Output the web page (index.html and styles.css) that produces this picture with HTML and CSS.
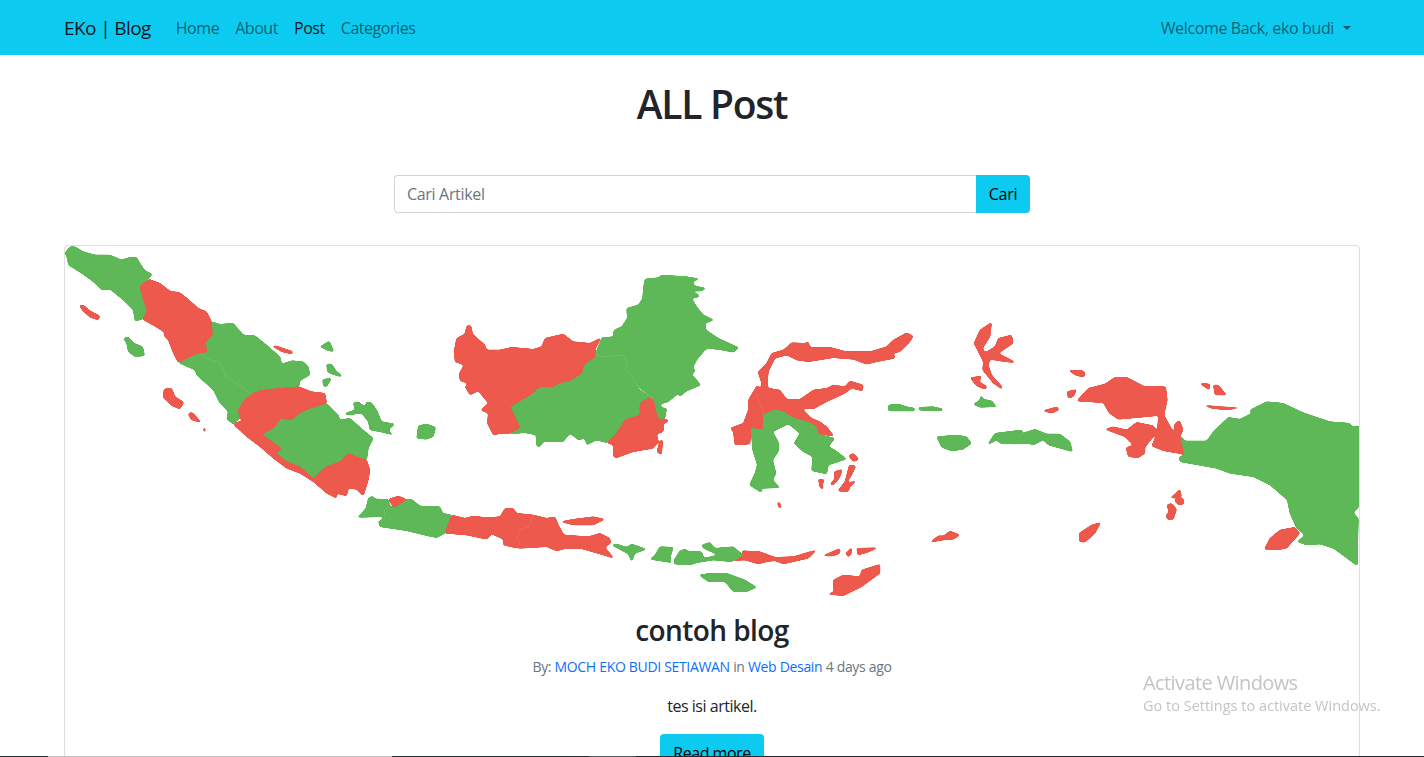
FILE: index.html
```html
<!DOCTYPE html>
<html lang="en">
<head>
  <meta charset="UTF-8">
  <title>EKo | Blog</title>
  <link rel="stylesheet" href="styles.css">
</head>
<body>
  <nav class="navbar">
    <a class="brand" href="#">EKo | Blog</a>
    <ul class="nav-links">
      <li><a href="#">Home</a></li>
      <li><a href="#">About</a></li>
      <li><a class="active" href="#">Post</a></li>
      <li><a href="#">Categories</a></li>
    </ul>
    <a class="user-menu" href="#">Welcome Back, eko budi<span class="caret"></span></a>
  </nav>

  <div class="container">
    <h1 class="page-title">ALL Post</h1>

    <form class="search">
      <input class="search-input" type="text" placeholder="Cari Artikel">
      <button class="search-btn" type="button">Cari</button>
    </form>

    <div class="card">
      <svg class="map" viewBox="65 246 1294 350" xmlns="http://www.w3.org/2000/svg">
        <defs>
          <!-- rounds the polygon corners so the coast looks less cut -->
          <filter id="smooth" color-interpolation-filters="sRGB">
            <feGaussianBlur stdDeviation="2.4"/>
            <feColorMatrix type="matrix" values="1 0 0 0 0  0 1 0 0 0  0 0 1 0 0  0 0 0 7 -2.6"/>
          </filter>
        </defs>

        <!-- sumatra -->
        <g transform="translate(60 240) scale(.3333)">
          <g class="g" filter="url(#smooth)">
            <path d="M15,38 L30,20 L45,20 L70,35 L105,45 L150,45 L185,60 L205,53 L230,52 L240,70 L255,92 L277,102 L265,118 L240,138 L250,180 L262,212 L248,238 L225,243 L220,210 L190,180 L165,160 L150,148 L125,150 L100,125 L65,100 L25,75 L22,55 Z"/>
            <path d="M455,245 L480,253 L520,250 L550,285 L585,287 L620,315 L660,350 L665,372 L695,362 L730,365 L745,380 L750,405 L720,422 L717,440 L640,447 L600,452 L575,462 L550,485 L535,510 L540,535 L520,553 L500,537 L505,515 L480,490 L460,450 L410,405 L405,390 L355,368 L385,352 L415,340 L442,335 L435,310 L457,285 Z"/>
            <path d="M605,583 L645,560 L660,535 L695,540 L720,518 L750,505 L800,490 L835,525 L840,540 L870,535 L910,570 L940,595 L925,625 L920,660 L900,655 L865,640 L840,665 L800,680 L780,695 L760,717 L720,680 L680,665 L648,640 L665,625 L650,615 Z"/>
            <path d="M190,295 L205,291 L222,310 L248,320 L254,347 L225,350 L205,335 L200,310 Z"/>
            <path d="M780,320 L808,303 L822,335 L805,332 Z"/>
            <path d="M800,372 L815,372 L830,395 L846,405 L842,410 L815,402 L802,395 Z"/>
            <path d="M788,418 L815,415 L800,440 L790,438 Z"/>
            <path d="M855,520 L885,510 L880,488 L895,485 L915,500 L920,485 L935,488 L950,510 L965,545 L1005,552 L985,570 L1000,585 L960,575 L930,570 L925,545 L905,520 L860,525 Z"/>
          </g>
          <g class="r" filter="url(#smooth)">
            <path d="M268,118 L300,130 L330,153 L360,158 L385,178 L415,205 L440,215 L455,245 L457,285 L435,310 L442,335 L415,340 L385,352 L355,368 L340,340 L325,300 L310,285 L315,278 L290,262 L248,238 L262,212 L250,180 L240,138 Z"/>
            <path d="M575,462 L600,452 L640,447 L717,440 L755,455 L795,460 L800,490 L750,505 L720,518 L695,540 L660,535 L645,560 L605,583 L570,565 L540,535 L535,510 L550,485 Z"/>
            <path d="M520,553 L540,543 L570,565 L605,583 L650,615 L665,625 L648,640 L680,665 L720,680 L760,717 L780,695 L800,680 L840,665 L865,640 L900,655 L920,660 L930,690 L925,720 L910,768 L890,748 L865,745 L860,768 L830,760 L830,775 L800,760 L760,725 L720,700 L680,685 L640,655 L600,620 L560,590 Z"/>
            <path d="M58,196 L70,195 L90,212 L120,228 L115,240 L90,232 L68,212 Z"/>
            <path d="M312,447 L335,445 L345,470 L372,487 L360,507 L335,497 L310,473 Z"/>
            <path d="M388,518 L398,518 L425,548 L395,540 L385,525 Z"/>
            <path d="M432,558 L438,576 L430,574 Z"/>
            <path d="M635,317 L650,318 L700,335 L695,342 L665,335 Z"/>
          </g>
          <path class="line-g" d="M420,340 L440,355 L480,370 L500,410 L575,462"/>
        </g>

        <!-- kalimantan, java -->
        <g transform="translate(340 260) scale(.3333)">
          <g class="g" filter="url(#smooth)">
            <path d="M235,497 L260,492 L287,502 L280,530 L260,538 L230,535 Z"/>
            <path d="M510,440 L570,405 L600,380 L640,380 L660,368 L690,362 L725,340 L735,310 L770,287 L800,290 L855,287 L865,310 L860,330 L900,390 L942,417 L925,415 L900,430 L900,465 L855,480 L830,520 L800,548 L770,540 L740,555 L735,535 L715,540 L690,520 L670,545 L610,545 L600,560 L590,558 L588,525 L555,518 L505,522 L540,503 L525,470 Z"/>
            <path d="M28,765 L55,770 L78,745 L85,715 L98,708 L105,717 L145,718 L150,740 L135,745 L133,770 L60,772 L40,770 Z"/>
            <path d="M150,740 L175,735 L200,718 L215,718 L240,738 L300,740 L308,760 L335,765 L315,820 L290,833 L265,828 L200,812 L120,800 L115,785 L135,772 L133,750 Z"/>
            <path d="M815,855 L830,852 L860,862 L875,852 L920,868 L885,880 L875,905 L865,882 Z"/>
            <path d="M960,860 L1000,862 L990,895 L995,908 L930,898 L945,885 Z"/>
          </g>
          <g class="r" filter="url(#smooth)">
            <path d="M350,235 L375,222 L380,197 L393,197 L398,222 L435,255 L440,270 L480,270 L515,262 L580,268 L605,260 L615,235 L670,222 L700,245 L750,250 L783,233 L765,270 L770,287 L735,310 L725,340 L690,362 L660,368 L640,380 L600,380 L570,405 L510,440 L525,470 L540,503 L505,522 L485,520 L460,525 L442,490 L445,460 L422,450 L445,430 L415,393 L390,405 L375,380 L385,370 L360,362 L358,340 L372,315 L345,305 L343,270 Z"/>
            <path d="M942,417 L952,470 L970,475 L988,482 L970,492 L970,515 L950,522 L955,545 L940,565 L880,575 L830,593 L820,590 L820,555 L800,548 L830,520 L855,480 L900,465 L900,430 L925,415 Z"/>
            <path d="M962,540 L968,540 L965,585 L950,575 Z"/>
            <path d="M145,718 L175,708 L200,718 L175,735 L160,742 Z"/>
            <path d="M335,765 L375,775 L400,768 L440,773 L480,770 L495,745 L520,745 L530,760 L580,765 L565,800 L540,810 L530,835 L540,850 L520,862 L490,855 L490,838 L455,822 L440,838 L380,825 L315,820 Z"/>
            <path d="M580,765 L620,775 L645,770 L655,795 L672,825 L745,830 L780,820 L810,835 L812,850 L795,862 L822,895 L790,885 L720,865 L680,865 L650,873 L620,860 L540,865 L520,862 L540,850 L530,835 L540,810 L565,800 Z"/>
            <path d="M662,785 L700,778 L760,770 L795,778 L760,795 L700,795 Z"/>
          </g>
          <path class="line-r" d="M580,765 L565,800 L540,810 L530,835 L540,850"/>
          <path class="line-g" d="M150,740 L133,750 L133,772"/>
        </g>

        <!-- north kalimantan -->
        <g transform="translate(590 265) scale(.3333)">
          <g class="g" filter="url(#smooth)">
            <path d="M35,218 L70,215 L72,195 L95,185 L112,160 L110,130 L145,120 L158,100 L160,70 L165,42 L205,38 L215,30 L290,35 L330,42 L310,48 L312,62 L348,70 L335,78 L292,78 L325,88 L328,95 L305,100 L320,125 L340,150 L372,165 L345,175 L348,195 L385,220 L447,248 L430,262 L395,255 L355,250 L345,255 L320,285 L310,305 L315,320 L305,328 L333,360 L290,378 L272,393 L262,388 L235,410 L210,418 L215,428 L230,430 L225,460 L205,460 L192,402 L150,370 L120,330 L105,310 L115,298 L100,270 L40,275 L15,270 Z"/>
          </g>
          <path class="line-g" d="M15,270 L40,275 L100,270 L115,298 L105,310 L120,330 L150,370 L192,402"/>
        </g>

        <!-- sulawesi, nusa tenggara, maluku -->
        <g transform="translate(680 310) scale(.3333)">
          <g class="r" filter="url(#smooth)">
            <path d="M205,270 L232,225 L242,238 L245,220 L234,185 L260,160 L275,130 L310,120 L335,98 L375,100 L385,95 L390,112 L450,112 L500,125 L570,125 L620,110 L640,90 L680,68 L700,78 L690,95 L660,125 L640,130 L645,145 L590,155 L560,163 L520,148 L460,143 L385,155 L350,150 L320,135 L285,145 L265,185 L262,220 L265,235 L300,240 L320,268 L360,268 L400,240 L440,235 L460,225 L495,230 L510,213 L550,225 L548,243 L515,235 L495,250 L440,275 L400,297 L365,295 L395,325 L420,335 L440,350 L462,378 L410,372 L412,350 L380,335 L340,325 L310,305 L285,300 L250,315 L250,360 L213,355 L210,402 L165,405 L160,365 L150,355 L190,340 L205,300 Z"/>
            <path d="M508,435 L520,430 L537,448 L522,455 L510,445 Z"/>
            <path d="M462,485 L488,478 L478,505 L460,525 L450,523 L465,505 Z"/>
            <path d="M508,465 L528,468 L515,495 L500,520 L530,512 L510,530 L505,545 L473,543 L495,515 Z"/>
            <path d="M415,507 L435,510 L428,520 L430,538 L420,533 Z"/>
            <path d="M292,577 L300,578 L305,596 L295,590 Z"/>
            <path d="M935,37 L900,60 L882,100 L900,135 L910,155 L908,180 L940,220 L965,237 L968,232 L935,195 L925,165 L930,148 L975,155 L1008,158 L990,148 L955,130 L1000,100 L995,75 L955,85 L945,110 L915,128 L908,115 L930,80 Z"/>
            <path d="M870,203 L905,198 L898,215 L922,230 L915,238 L890,228 Z"/>
            <path d="M155,752 L190,735 L185,722 L240,725 L285,742 L340,740 L390,725 L410,720 L385,745 L310,762 L285,752 L260,755 L235,762 L195,750 Z"/>
            <path d="M427,738 L480,715 L480,730 L460,738 Z"/>
            <path d="M497,730 L515,712 L515,730 L505,742 Z"/>
            <path d="M530,715 L595,713 L560,728 L533,735 Z"/>
            <path d="M443,853 L462,845 L460,810 L490,795 L540,800 L545,780 L600,763 L600,790 L545,830 L490,857 Z"/>
            <path d="M750,697 L775,677 L790,678 L810,663 L840,675 L820,688 L790,690 Z"/>
          </g>
          <g class="g" filter="url(#smooth)">
            <path d="M250,315 L285,300 L310,305 L340,325 L380,335 L410,350 L412,372 L465,385 L445,410 L465,420 L500,447 L445,465 L440,492 L395,482 L398,440 L370,425 L342,400 L360,370 L325,342 L278,365 L295,395 L295,425 L278,450 L288,490 L278,510 L300,533 L245,535 L245,548 L208,525 L225,490 L232,465 L218,420 L213,355 L250,360 Z"/>
            <path d="M880,283 L900,270 L903,255 L910,268 L935,272 L950,290 L900,292 Z"/>
            <path d="M625,285 L655,282 L680,290 L705,295 L703,303 L625,303 Z"/>
            <path d="M715,292 L760,290 L790,297 L785,303 L730,302 L718,300 Z"/>
            <path d="M770,380 L830,375 L860,380 L875,400 L850,418 L815,423 L785,412 Z"/>
            <path d="M922,405 L945,370 L1025,360 L1030,372 L1050,368 L1050,400 L1000,402 L960,400 L950,390 Z"/>
            <path d="M-18,750 L0,722 L15,718 L30,725 L65,725 L72,745 L115,735 L70,715 L65,705 L90,697 L105,715 L160,710 L190,735 L155,755 L100,750 L50,758 L30,765 L-18,762 Z"/>
            <path d="M57,795 L90,790 L140,790 L195,810 L230,832 L200,845 L160,845 L135,815 L85,815 Z"/>
          </g>
          <path class="line-r" d="M222,240 L250,300 L250,315"/>
        </g>

        <!-- papua -->
        <g transform="translate(1020 360) scale(.3333)">
          <g class="r" filter="url(#smooth)">
            <path d="M145,30 L190,32 L197,42 L190,52 L165,45 Z"/>
            <path d="M140,95 L170,88 L160,110 L145,115 Z"/>
            <path d="M68,152 L112,140 L117,150 L95,160 Z"/>
            <path d="M170,123 L205,85 L255,72 L285,52 L320,52 L375,80 L437,80 L442,120 L432,165 L380,170 L295,178 L268,160 L250,128 Z"/>
            <path d="M255,208 L280,200 L320,210 L350,187 L400,197 L412,215 L375,262 L375,280 L355,293 L325,290 L318,263 L340,255 L315,230 Z"/>
            <path d="M415,170 L432,165 L465,225 L462,195 L478,180 L490,210 L480,228 L495,285 L475,280 L430,272 L395,258 L412,220 Z"/>
            <path d="M538,70 L570,72 L568,90 Z"/>
            <path d="M580,75 L595,75 L620,105 L585,105 Z"/>
            <path d="M548,135 L600,140 L665,143 L620,150 L575,145 Z"/>
            <path d="M733,568 L750,535 L780,510 L825,502 L840,520 L800,565 L770,570 Z"/>
            <path d="M450,415 L480,388 L485,410 Z"/>
            <path d="M462,420 L490,415 L492,432 L475,435 Z"/>
            <path d="M440,435 L455,430 L470,448 L460,478 L445,480 L437,468 L447,455 Z"/>
            <path d="M177,520 L215,495 L243,487 L225,520 L195,547 L178,545 Z"/>
          </g>
          <g class="g" filter="url(#smooth)">
            <path d="M-10,225 L45,208 L80,222 L120,222 L150,245 L158,275 L85,255 L70,240 L40,255 L-10,238 Z"/>
            <path d="M480,225 L495,243 L560,243 L580,215 L625,172 L660,178 L695,160 L690,150 L740,125 L790,130 L850,158 L930,185 L990,190 L995,200 L1017,197 L1017,440 L1000,458 L1015,475 L1012,618 L975,590 L940,565 L900,552 L860,555 L832,545 L855,525 L830,505 L810,460 L802,420 L750,375 L700,350 L630,340 L590,325 L480,305 L478,290 L495,285 Z"/>
          </g>
        </g>
      </svg>
      <div class="card-body">
        <h3 class="card-title">contoh blog</h3>
        <p class="meta"><small>By: <a href="#">MOCH EKO BUDI SETIAWAN</a> in <a href="#">Web Desain</a> 4 days ago</small></p>
        <p class="excerpt">tes isi artikel.</p>
        <a class="read-more" href="#">Read more</a>
      </div>
    </div>
  </div>

  <div class="activate">
    <div class="activate-title">Activate Windows</div>
    <div class="activate-sub">Go to Settings to activate Windows.</div>
  </div>

  <div class="taskbar-edge">
    <span class="seg seg-a"></span>
    <span class="seg seg-b"></span>
    <span class="seg seg-c"></span>
    <span class="seg seg-d"></span>
    <span class="seg seg-e"></span>
  </div>
</body>
</html>
```

FILE: styles.css
```css
html, body {
  height: 100%;
  overflow: hidden;
}

body {
  margin: 0;
  background: #fff;
  color: #212529;
  font-family: "Open Sans", "Noto Sans", sans-serif;
  font-size: 16px;
  line-height: 24px;
  letter-spacing: -0.02em;
}

a {
  text-decoration: none;
}

/* navbar */
.navbar {
  display: flex;
  align-items: center;
  height: 55px;
  padding: 0 73px 0 64px;
  background: #0dcaf0;
}

.brand {
  margin-right: 17px;
  font-size: 19px;
  letter-spacing: -0.6px;
  color: rgba(0,0,0,0.9);
}

.nav-links {
  display: flex;
  flex: 1;
  margin: 0;
  padding: 0;
  list-style: none;
}

.nav-links a {
  display: block;
  padding: 8px;
  letter-spacing: -0.45px;
  color: rgba(0,0,0,0.55);
}

.nav-links a.active {
  color: rgba(0,0,0,0.9);
}

.user-menu {
  display: flex;
  align-items: center;
  letter-spacing: -0.36px;
  color: rgba(0,0,0,0.55);
}

.caret {
  width: 0;
  height: 0;
  margin-left: 9px;
  border-top: 4.5px solid rgba(0,0,0,0.55);
  border-left: 4.5px solid transparent;
  border-right: 4.5px solid transparent;
}

/* page */
.container {
  width: 1296px;
  margin: 0 auto;
}

.page-title {
  margin: 25px 0 0;
  font-size: 39px;
  line-height: 48px;
  font-weight: 600;
  letter-spacing: -1.25px;
  text-align: center;
}

.search {
  display: flex;
  width: 636px;
  height: 38px;
  margin: 47px auto 32px;
}

.search-input {
  flex: 1;
  box-sizing: border-box;
  padding: 6px 12px;
  border: 1px solid #ced4da;
  border-right: 0;
  border-radius: 4px 0 0 4px;
  font: inherit;
  letter-spacing: inherit;
  outline: none;
}

.search-input::placeholder {
  color: #6c757d;
}

.search-btn {
  width: 54px;
  padding: 0;
  border: 0;
  border-radius: 0 4px 4px 0;
  background: #0dcaf0;
  color: #000;
  font: inherit;
  letter-spacing: inherit;
}

/* card */
.card {
  border: 1px solid #dfdfdf;
  border-radius: 4px;
  text-align: center;
}

.map {
  display: block;
  width: 100%;
  height: 350px;
}

.g {
  fill: #5eb857;
  stroke: #5eb857;
  stroke-width: 1.5;
  stroke-linejoin: round;
}

.r {
  fill: #ed594c;
  stroke: #ed594c;
  stroke-width: 1.5;
  stroke-linejoin: round;
}

.line-g {
  fill: none;
  stroke: #7cc676;
  stroke-width: 1.5;
}

.line-r {
  fill: none;
  stroke: #f0776b;
  stroke-width: 1.5;
}

.card-body {
  padding: 16px;
}

.card-title {
  margin: 0 0 6px;
  font-size: 28px;
  line-height: 36px;
  font-weight: 600;
  letter-spacing: -0.02em;
}

.meta {
  margin: 0 0 15px;
  color: #6c757d;
}

.meta small {
  font-size: 14px;
}

.meta a {
  color: #0d6efd;
}

.excerpt {
  margin: 0 0 16px;
  letter-spacing: -0.03em;
}

.read-more {
  display: inline-block;
  padding: 7px 13px;
  border-radius: 4px;
  background: #0dcaf0;
  letter-spacing: -0.03em;
  color: #000;
}

/* windows watermark and taskbar sliver */
.activate {
  position: fixed;
  left: 1143px;
  top: 669px;
  color: #c4c4c4;
}

.activate-title {
  font-size: 20px;
  line-height: 28px;
  letter-spacing: -0.03em;
}

.activate-sub {
  font-size: 14.5px;
  line-height: 17px;
  letter-spacing: 0;
}

.taskbar-edge {
  position: fixed;
  left: 0;
  right: 0;
  bottom: 0;
  display: flex;
  height: 1px;
}

.seg-a { width: 48px; background: #1f3036; }
.seg-b { width: 344px; background: #c4c4c4; }
.seg-c { width: 197px; background: #1f3036; }
.seg-d { width: 47px; background: #4b5a60; }
.seg-e { flex: 1; background: #1c2a33; }
```
